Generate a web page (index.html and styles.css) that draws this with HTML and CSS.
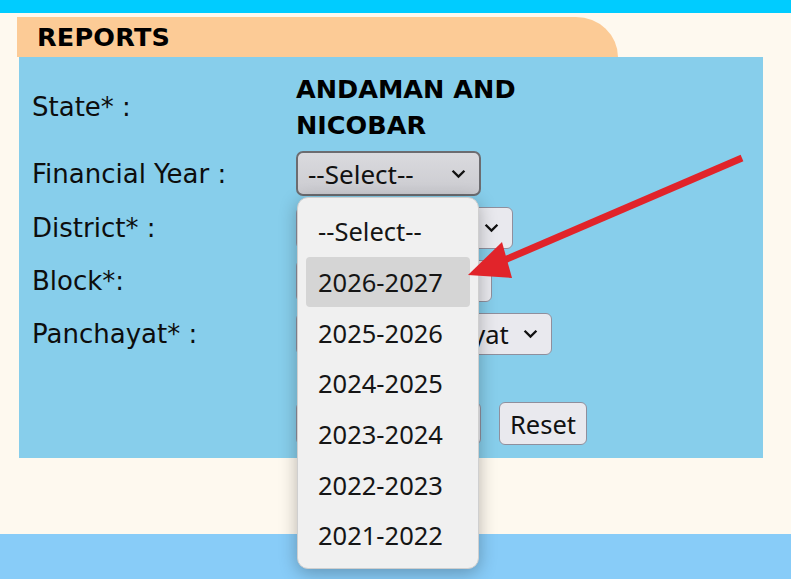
FILE: index.html
```html
<!DOCTYPE html>
<html lang="en">
<head>
<meta charset="utf-8">
<title>Reports</title>
<link rel="stylesheet" href="styles.css">
</head>
<body>
<div class="topbar"></div>
<div class="page">
  <div class="tab"><span class="tab-title">REPORTS</span></div>
  <div class="panel">
    <div class="form">
      <div class="label">State* :</div>
      <div class="value">ANDAMAN AND<br>NICOBAR</div>

      <div class="label">Financial Year :</div>
      <div class="cell"><div class="select select-open"><span>--Select--</span><svg class="chev" viewBox="0 0 14 9"><path d="M1.5 1.5 L7 7 L12.5 1.5" /></svg></div></div>

      <div class="label">District* :</div>
      <div class="cell"><div class="select"><span>Select District</span><svg class="chev" viewBox="0 0 14 9"><path d="M1.5 1.5 L7 7 L12.5 1.5" /></svg></div></div>

      <div class="label">Block*:</div>
      <div class="cell"><div class="select"><span>Select Block</span><svg class="chev" viewBox="0 0 14 9"><path d="M1.5 1.5 L7 7 L12.5 1.5" /></svg></div></div>

      <div class="label">Panchayat* :</div>
      <div class="cell"><div class="select"><span>Select Panchayat</span><svg class="chev" viewBox="0 0 14 9"><path d="M1.5 1.5 L7 7 L12.5 1.5" /></svg></div></div>

      <div class="spacer"></div>
      <div class="spacer"></div>

      <div class="label"></div>
      <div class="cell buttons"><button class="btn btn-submit">Submit</button><button class="btn">Reset</button></div>
    </div>
  </div>
</div>
<div class="footer"></div>

<div class="dropdown">
  <div class="opt">--Select--</div>
  <div class="opt opt-hi">2026-2027</div>
  <div class="opt">2025-2026</div>
  <div class="opt">2024-2025</div>
  <div class="opt">2023-2024</div>
  <div class="opt">2022-2023</div>
  <div class="opt">2021-2022</div>
</div>

<svg class="arrow" viewBox="0 0 791 579" width="791" height="579">
  <line x1="742" y1="158" x2="500" y2="262" stroke="#e1242a" stroke-width="7" />
  <polygon points="468,275 502,242 512,278" fill="#e1242a" />
</svg>
</body>
</html>
```

FILE: styles.css
```css
html, body {
  margin: 0;
  padding: 0;
}
body {
  background: #fef9ef;
  width: 791px;
  height: 579px;
  overflow: hidden;
  position: relative;
  font-family: "DejaVu Sans", Verdana, sans-serif;
  color: #111;
}
.topbar {
  height: 13px;
  background: #00ccff;
}
.page {
  padding: 4px 0 0 17px;
}
.tab {
  width: 601px;
  height: 40px;
  background: #fccb96;
  border-top-right-radius: 42px 40px;
  display: flex;
  align-items: center;
  box-sizing: border-box;
  padding-left: 20px;
}
.tab-title {
  font-weight: bold;
  font-size: 25.5px;
  color: #000;
  letter-spacing: 0.2px;
}
.panel {
  margin-left: 2px;
  width: 744px;
  height: 401px;
  background: #87ceeb;
  box-sizing: border-box;
  padding-top: 11px;
}
.form {
  display: grid;
  grid-template-columns: 277px 1fr;
  grid-template-rows: 78px 55px 53px 53px 53px 37px 53px;
}
.label {
  padding-left: 13px;
  font-size: 26px;
  display: flex;
  align-items: center;
  white-space: pre;
  color: #0d0d0d;
}
.value {
  font-weight: bold;
  font-size: 25.5px;
  line-height: 36px;
  display: flex;
  align-items: center;
  color: #000;
}
.cell {
  display: flex;
  align-items: center;
}
.select {
  height: 42px;
  box-sizing: border-box;
  border: 1.5px solid #8f8f9d;
  border-radius: 6px;
  background: #e9e9ee;
  display: flex;
  align-items: center;
  padding: 0 13px 0 10px;
  gap: 14px;
  font-family: "Noto Sans", "Open Sans", sans-serif;
  font-size: 25.5px;
  color: #111;
}
.select-open {
  height: 45px;
  width: 185px;
  font-size: 26px;
  border: 2px solid #6c6c70;
  border-radius: 7px;
  background: linear-gradient(#dadade, #cbcbd0);
  justify-content: space-between;
}
.chev {
  width: 15px;
  height: 10px;
  fill: none;
  stroke: #111;
  stroke-width: 2.2;
  flex: none;
}
.buttons {
  gap: 18px;
}
.btn {
  height: 43px;
  box-sizing: border-box;
  border: 1.5px solid #8f8f9d;
  border-radius: 6px;
  background: #e9e9ee;
  font-family: "Noto Sans", "Open Sans", sans-serif;
  font-size: 25.5px;
  color: #111;
  padding: 0 10px;
  margin: 0;
}
.btn-submit {
  width: 185px;
}
.spacer {
  height: 37px;
}
.footer {
  margin-top: 76px;
  height: 60px;
  background: #88ccf8;
}
.dropdown {
  position: absolute;
  left: 297px;
  top: 197px;
  width: 182px;
  height: 372px;
  box-sizing: border-box;
  background: #f0f0f0;
  border: 1px solid #cfcfcf;
  border-radius: 11px;
  box-shadow: 0 4px 18px rgba(0, 0, 0, 0.28);
  padding: 8px 8px;
  font-family: "Noto Sans", "Open Sans", sans-serif;
  font-size: 25.5px;
  color: #151515;
}
.opt {
  height: 50.7px;
  display: flex;
  align-items: center;
  padding-left: 12px;
  border-radius: 4px;
}
.opt-hi {
  background: #d5d5d5;
}
.arrow {
  position: absolute;
  left: 0;
  top: 0;
  pointer-events: none;
}
```
